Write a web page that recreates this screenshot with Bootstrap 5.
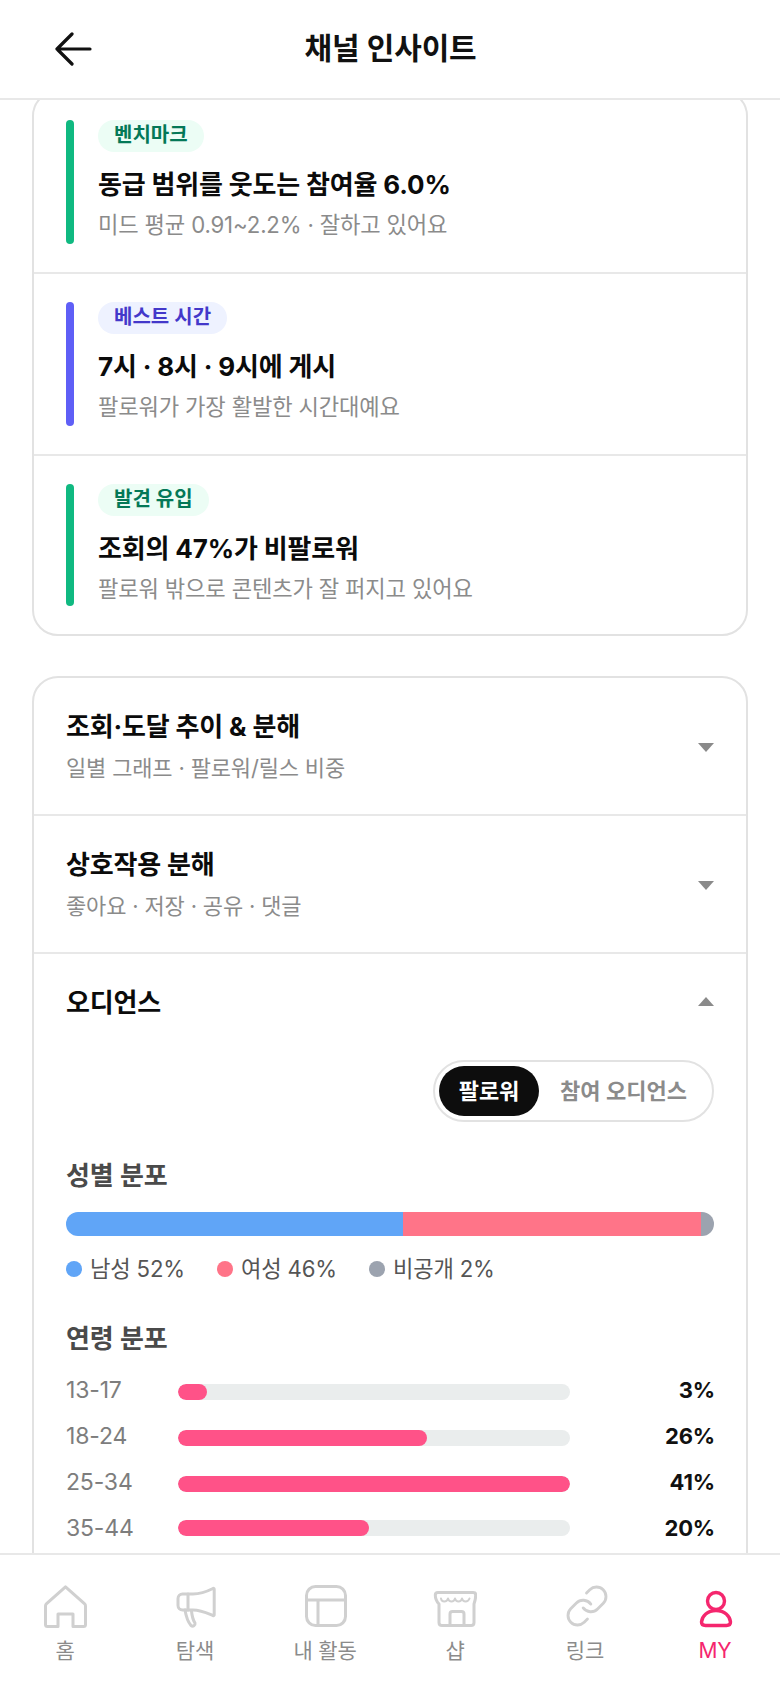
<!DOCTYPE html>
<html lang="ko">
<head>
    <meta charset="UTF-8">
    <meta name="viewport" content="width=device-width, initial-scale=1.0">
    <title>채널 인사이트</title>
    <link href="https://cdn.jsdelivr.net/npm/bootstrap@5.3.0/dist/css/bootstrap.min.css" rel="stylesheet">
    <style>
        html, body { height: 100%; }
        body {
            font-family: Inter, "Noto Sans CJK KR", sans-serif;
            color: #111;
            background: #fff;
            letter-spacing: -0.01em;
        }
        .app-shell { height: 1688px; overflow: hidden; }
        .app-header { height: 100px; border-bottom: 2px solid #e8e8e8; padding-left: 54px; position: relative; z-index: 2; background: #fff; flex: none; }
        .app-title { font-size: 30px; font-weight: 600; left: 1px; right: 0; top: 26px; line-height: 44px; text-align: center; }
        .app-body { min-height: 0; overflow: hidden; padding: 0 32px; }
        .panel { border: 2px solid #e2e2e2; border-radius: 26px; background: #fff; }
        .panel-top { margin-top: -10px; }
        .panel-second { margin-top: 40px; }
        .insight { padding: 28px 30px 28px 32px; gap: 24px; border-bottom: 2px solid #e8e8e8; height: 182px; }
        .insight:last-child { border-bottom: 0; height: 178px; }
        .side-bar { width: 8px; height: 124px; border-radius: 4px; flex: none; }
        .insight:last-child .side-bar { height: 122px; }
        .bar-green { background: #10b981; }
        .bar-indigo { background: #5f5ff6; }
        .tag { display: inline-block; height: 32px; line-height: 30px; padding: 0 16px; border-radius: 16px; font-size: 20px; font-weight: 600; letter-spacing: 0; }
        .tag-green { background: #ecfdf5; color: #047857; }
        .tag-indigo { background: #eef2ff; color: #4338ca; }
        .insight-title { font-size: 26px; font-weight: 700; line-height: 38px; margin-top: 14px; color: #0b0b0b; }
        .insight-sub { font-size: 22.2px; line-height: 32px; margin-top: 5px; color: #8b8b8b; }
        .acc-row { padding: 0 32px; border-bottom: 2px solid #e8e8e8; height: 138px; }
        .acc-title { font-size: 26px; font-weight: 700; line-height: 38px; color: #0b0b0b; }
        .acc-sub { font-size: 22px; line-height: 32px; margin-top: 6px; color: #8b8b8b; }
        .caret { width: 0; height: 0; border-left: 8.5px solid transparent; border-right: 8.5px solid transparent; }
        .caret-down { border-top: 9px solid #8a8a8a; margin-top: 2px; }
        .caret-up { border-bottom: 9px solid #8a8a8a; margin-bottom: 3px; }
        .acc-open { padding: 30px 32px 80px; }
        .switcher { border: 2px solid #e2e2e2; border-radius: 31px; padding: 4px; height: 62px; margin-top: 38px; font-size: 22px; font-weight: 600; letter-spacing: 0; }
        .switch-on { background: #0d0d0d; color: #fff; border-radius: 25px; width: 100px; line-height: 50px; height: 50px; text-align: center; }
        .switch-off { color: #8b8b8b; padding: 0 21px; line-height: 50px; }
        .sec-title { font-size: 26px; font-weight: 600; line-height: 36px; color: #4a4a4a; }
        .sec-gender { margin-top: 36px; }
        .sec-age { margin-top: 35px; margin-bottom: 12px; }
        .split { height: 24px; border-radius: 12px; overflow: hidden; margin-top: 18px; }
        .split-m { background: #60a5f7; }
        .split-f { background: #ff7488; }
        .split-n { background: #9ca3af; }
        .legend { margin-top: 16px; line-height: 34px; font-size: 22.2px; color: #555; gap: 32px; }
        .dot { width: 16px; height: 16px; border-radius: 50%; margin-right: 8px; flex: none; }
        .age-row { height: 46px; }
        .age-row:last-child { margin-top: -2px; }
        .age-label { width: 112px; font-size: 23px; color: #7d7d7d; flex: none; margin-bottom: 3px; }
        .age-track { width: 392px; height: 16px; border-radius: 8px; background: #eaeded; overflow: hidden; flex: none; }
        .age-fill { height: 100%; border-radius: 8px; background: #ff5288; }
        .age-val { font-size: 22px; font-weight: 700; color: #111; margin-right: -1px; margin-bottom: 3px; }
        .age-row:last-child .age-label, .age-row:last-child .age-val { margin-bottom: 0; }
        .tabbar { height: 135px; border-top: 2px solid #e8e8e8; background: #fff; position: relative; z-index: 2; flex: none; }
        .tab-item { width: 130px; padding-top: 30px; color: #8b8b8b; font-size: 21px; line-height: 30px; }
        .tab-item svg { display: block; margin-bottom: 7px; }
        .tab-item .link-icon { margin-left: 3px; }
        .tab-on { color: #f5266e; }
    </style>
</head>
<body>
    <div class="app-shell d-flex flex-column">
        <header class="app-header d-flex align-items-center">
            <svg width="40" height="34" viewBox="0 0 40 34" fill="none" stroke="#111" stroke-width="3.2" stroke-linecap="round" stroke-linejoin="round"><path d="M18 2 3 17l15 15M3 17h33"/></svg>
            <div class="app-title position-absolute">채널 인사이트</div>
        </header>

        <main class="app-body flex-grow-1">
            <section class="panel panel-top">
                <div class="insight d-flex">
                    <div class="side-bar bar-green"></div>
                    <div>
                        <span class="tag tag-green">벤치마크</span>
                        <div class="insight-title">동급 범위를 웃도는 참여율 6.0%</div>
                        <div class="insight-sub">미드 평균 0.91~2.2% · 잘하고 있어요</div>
                    </div>
                </div>
                <div class="insight d-flex">
                    <div class="side-bar bar-indigo"></div>
                    <div>
                        <span class="tag tag-indigo">베스트 시간</span>
                        <div class="insight-title">7시 · 8시 · 9시에 게시</div>
                        <div class="insight-sub">팔로워가 가장 활발한 시간대예요</div>
                    </div>
                </div>
                <div class="insight d-flex">
                    <div class="side-bar bar-green"></div>
                    <div>
                        <span class="tag tag-green">발견 유입</span>
                        <div class="insight-title">조회의 47%가 비팔로워</div>
                        <div class="insight-sub">팔로워 밖으로 콘텐츠가 잘 퍼지고 있어요</div>
                    </div>
                </div>
            </section>

            <section class="panel panel-second">
                <div class="acc-row d-flex align-items-center justify-content-between">
                    <div>
                        <div class="acc-title">조회·도달 추이 &amp; 분해</div>
                        <div class="acc-sub">일별 그래프 · 팔로워/릴스 비중</div>
                    </div>
                    <div class="caret caret-down"></div>
                </div>
                <div class="acc-row d-flex align-items-center justify-content-between">
                    <div>
                        <div class="acc-title">상호작용 분해</div>
                        <div class="acc-sub">좋아요 · 저장 · 공유 · 댓글</div>
                    </div>
                    <div class="caret caret-down"></div>
                </div>
                <div class="acc-open">
                    <div class="d-flex align-items-center justify-content-between">
                        <div class="acc-title">오디언스</div>
                        <div class="caret caret-up"></div>
                    </div>
                    <div class="d-flex justify-content-end">
                        <div class="switcher d-flex">
                            <div class="switch-on">팔로워</div>
                            <div class="switch-off">참여 오디언스</div>
                        </div>
                    </div>
                    <div class="sec-title sec-gender">성별 분포</div>
                    <div class="split d-flex">
                        <div class="split-m" style="width:52%"></div>
                        <div class="split-f" style="width:46%"></div>
                        <div class="split-n" style="width:2%"></div>
                    </div>
                    <div class="legend d-flex">
                        <div class="d-flex align-items-center"><span class="dot split-m"></span>남성 52%</div>
                        <div class="d-flex align-items-center"><span class="dot split-f"></span>여성 46%</div>
                        <div class="d-flex align-items-center"><span class="dot split-n"></span>비공개 2%</div>
                    </div>
                    <div class="sec-title sec-age">연령 분포</div>
                    <div class="age-row d-flex align-items-center">
                        <div class="age-label">13-17</div>
                        <div class="age-track"><div class="age-fill" style="width:7.3%"></div></div>
                        <div class="age-val ms-auto">3%</div>
                    </div>
                    <div class="age-row d-flex align-items-center">
                        <div class="age-label">18-24</div>
                        <div class="age-track"><div class="age-fill" style="width:63.4%"></div></div>
                        <div class="age-val ms-auto">26%</div>
                    </div>
                    <div class="age-row d-flex align-items-center">
                        <div class="age-label">25-34</div>
                        <div class="age-track"><div class="age-fill" style="width:100%"></div></div>
                        <div class="age-val ms-auto">41%</div>
                    </div>
                    <div class="age-row d-flex align-items-center">
                        <div class="age-label">35-44</div>
                        <div class="age-track"><div class="age-fill" style="width:48.8%"></div></div>
                        <div class="age-val ms-auto">20%</div>
                    </div>
                </div>
            </section>
        </main>

        <nav class="tabbar d-flex">
            <div class="tab-item d-flex flex-column align-items-center">
                <svg width="44" height="44" viewBox="0 0 44 44" fill="none" stroke="#d0d0d0" stroke-width="3" stroke-linejoin="round"><path d="M22.500 1.800 3.600 18.600c-.8.700-1.100 1.400-1.100 2.400v18.500c0 1.300.8 2 2 2H15V29h15v12.500h10.500c1.200 0 2-.7 2-2V21c0-1-.3-1.700-1.100-2.400Z"/></svg>
                <span>홈</span>
            </div>
            <div class="tab-item d-flex flex-column align-items-center">
                <svg width="44" height="44" viewBox="0 0 44 44" fill="none" stroke="#d0d0d0" stroke-width="3" stroke-linejoin="round" stroke-linecap="round"><path d="M40 3.500c-6 3-12 5.500-20 5.500H9.500C7 9 5 11 5 13.500v7C5 23 7 25 9.500 25H20c8 0 14 3 20 5.500.7.300 1.200 0 1.200-.8V4.300c0-.8-.5-1.100-1.200-.8Z"/><path d="M15 9v16M12 25c1 6 3 12 6 15.500 2 1.500 4.500 0 4-2.500-2-3-3-7-3.500-12"/></svg>
                <span>탐색</span>
            </div>
            <div class="tab-item d-flex flex-column align-items-center">
                <svg width="44" height="44" viewBox="0 0 44 44" fill="none" stroke="#d0d0d0" stroke-width="3"><rect x="3.500" y="1.500" width="39" height="39" rx="9"/><path d="M3.500 15h39M15 15v25.500"/></svg>
                <span>내 활동</span>
            </div>
            <div class="tab-item d-flex flex-column align-items-center">
                <svg width="44" height="44" viewBox="0 0 44 44" fill="none" stroke="#d0d0d0" stroke-width="3" stroke-linejoin="round" stroke-linecap="round"><path d="M5 7.500h35c1.800 0 2.700 1 2.700 2.500 0 3.500-.7 6-1.700 9v18.500c0 2-1 3-3 3H9c-2 0-3-1-3-3V19C3 16 2.300 13.500 2.300 10c0-1.500.9-2.500 2.700-2.500Z"/><path d="M17 40.500V29c0-1.500 1-2.500 2.500-2.500h9c1.500 0 2.500 1 2.500 2.500v11.500"/><path stroke-width="2" d="M8 13.500c.5 4 6 4 7 0 1 4 6 4 7 0 1 4 6 4 7 0 1 4 6 4 7.500 0"/></svg>
                <span>샵</span>
            </div>
            <div class="tab-item d-flex flex-column align-items-center">
                <svg class="link-icon" width="42" height="42" viewBox="1 1 22 22" fill="none" stroke="#d0d0d0" stroke-width="1.500" stroke-linecap="round" stroke-linejoin="round"><path d="M10 13a5 5 0 0 0 7.540.54l3-3a5 5 0 0 0-7.070-7.070l-1.720 1.710"/><path d="M14 11a5 5 0 0 0-7.540-.54l-3 3a5 5 0 0 0 7.070 7.070l1.710-1.710"/></svg>
                <span style="margin-top:2px">링크</span>
            </div>
            <div class="tab-item tab-on d-flex flex-column align-items-center">
                <svg width="44" height="44" viewBox="0 0 44 44" fill="none" stroke="#f5266e" stroke-width="3.400" stroke-linejoin="round"><circle cx="23" cy="16" r="8.500"/><path d="M23 25.500c-8.500 0-14 5.500-14.500 11.500 0 2.500 1.500 3.500 4 3.500h21c2.500 0 4-1 4-3.500-.5-6-6-11.500-14.500-11.500Z"/></svg>
                <span>MY</span>
            </div>
        </nav>
    </div>
    <script src="https://cdn.jsdelivr.net/npm/bootstrap@5.3.0/dist/js/bootstrap.bundle.min.js"></script>
</body>
</html>
